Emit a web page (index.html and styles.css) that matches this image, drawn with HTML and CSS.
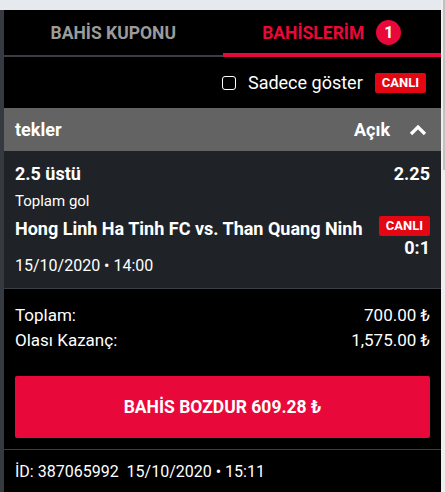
FILE: index.html
```html
<!DOCTYPE html>
<html lang="tr">
<head>
  <meta charset="UTF-8">
  <meta name="viewport" content="width=device-width, initial-scale=1.0">
  <title>Bahislerim</title>
  <link rel="stylesheet" href="styles.css">
</head>
<body>
  <div class="betslip">
    <div class="tabs">
      <div class="tab">BAHİS KUPONU</div>
      <div class="tab active">BAHİSLERİM <span class="count">1</span></div>
    </div>

    <div class="filter">
      <label class="check"><span class="box"></span> Sadece göster</label>
      <span class="live">CANLI</span>
    </div>

    <div class="group-head">
      <span>tekler</span>
      <span class="state">Açık
        <svg width="18" height="12" viewBox="0 0 18 12"><path d="M2 10 L9 3 L16 10" fill="none" stroke="#fff" stroke-width="3.2"/></svg>
      </span>
    </div>

    <div class="selection">
      <div class="line">
        <span class="bold">2.5 üstü</span>
        <span class="bold">2.25</span>
      </div>
      <div class="market">Toplam gol</div>
      <div class="line match">
        <span class="bold">Hong Linh Ha Tinh FC vs. Than Quang Ninh</span>
        <span class="score">
          <span class="live">CANLI</span>
          <span class="bold">0:1</span>
        </span>
      </div>
      <div class="date">15/10/2020 • 14:00</div>
    </div>

    <div class="totals">
      <div class="line"><span>Toplam:</span><span>700.00 ₺</span></div>
      <div class="line"><span>Olası Kazanç:</span><span>1,575.00 ₺</span></div>
    </div>

    <div class="cashout">
      <button>BAHİS BOZDUR 609.28 ₺</button>
    </div>

    <div class="meta">İD: 387065992&nbsp; 15/10/2020 • 15:11</div>
  </div>
  <div class="scrollbar"><div class="thumb"></div></div>
</body>
</html>
```

FILE: styles.css
```css
body {
  margin: 0;
  padding-top: 10px;
  width: 445px;
  height: 482px;
  overflow: hidden;
  background: #e6e9ed;
  font-family: Roboto, "Noto Sans", sans-serif;
  color: #fff;
  position: relative;
}
.betslip {
  width: 437px;
  height: 482px;
  background: #000;
  border-left: 4px solid #353a40;
}
.tabs {
  display: flex;
  height: 47px;
}
.tab {
  flex: 1;
  display: flex;
  align-items: center;
  justify-content: center;
  gap: 12px;
  font-size: 17.5px;
  font-weight: bold;
  color: #9b9b9b;
  border-bottom: 2px solid #3a3d44;
}
.tab.active {
  color: #e8083a;
  border-bottom: 4px solid #e8083a;
  padding-top: 2px;
}
.count {
  width: 25px;
  height: 25px;
  border-radius: 50%;
  background: #e8083a;
  color: #fff;
  font-size: 16px;
  display: flex;
  align-items: center;
  justify-content: center;
}
.filter {
  height: 51px;
  display: flex;
  align-items: center;
  justify-content: flex-end;
  padding: 0 15px 0 0;
  gap: 12px;
}
.check {
  display: flex;
  align-items: center;
  gap: 12px;
  font-size: 18px;
}
.box {
  width: 12px;
  height: 12px;
  border: 1.5px solid #fff;
  border-radius: 3px;
}
.live {
  display: inline-block;
  background: #e30613;
  color: #fff;
  font-size: 13px;
  font-weight: bold;
  padding: 0 7px;
  height: 20px;
  line-height: 20px;
  border-radius: 2px;
}
.group-head {
  height: 43px;
  background: #636363;
  display: flex;
  align-items: center;
  justify-content: space-between;
  padding: 0 14px 0 11px;
  font-size: 18px;
  font-weight: bold;
}
.state {
  display: flex;
  align-items: center;
  gap: 19px;
}
.selection {
  background: #1f2328;
  padding: 12px 11px 13px;
  border-bottom: 1px solid #3a3f45;
}
.line {
  display: flex;
  justify-content: space-between;
}
.bold {
  font-weight: bold;
  font-size: 18px;
}
.market {
  font-size: 15px;
  margin-top: 8px;
}
.match {
  margin-top: 6px;
  align-items: flex-start;
}
.match .bold {
  padding-top: 2px;
}
.score {
  display: flex;
  flex-direction: column;
  align-items: flex-end;
}
.score .bold {
  line-height: 19px;
}
.date {
  font-size: 16px;
  margin-top: -1px;
}
.totals {
  padding: 14px 11px 0;
  font-size: 17px;
  line-height: 25px;
}
.cashout {
  padding: 23px 11px 11px;
  border-bottom: 1px solid #3a3f45;
}
.cashout button {
  width: 100%;
  height: 62px;
  border: none;
  border-radius: 2px;
  background: #e8083a;
  color: #fff;
  font-family: inherit;
  font-size: 17.5px;
  font-weight: bold;
}
.meta {
  padding: 12px 11px;
  font-size: 16px;
}
.scrollbar {
  position: absolute;
  top: 0;
  right: 0;
  width: 4px;
  height: 492px;
  background: #eeeeee;
}
.thumb {
  margin-left: 2px;
  width: 2px;
  height: 170px;
  background: #c1c1c1;
}
```
